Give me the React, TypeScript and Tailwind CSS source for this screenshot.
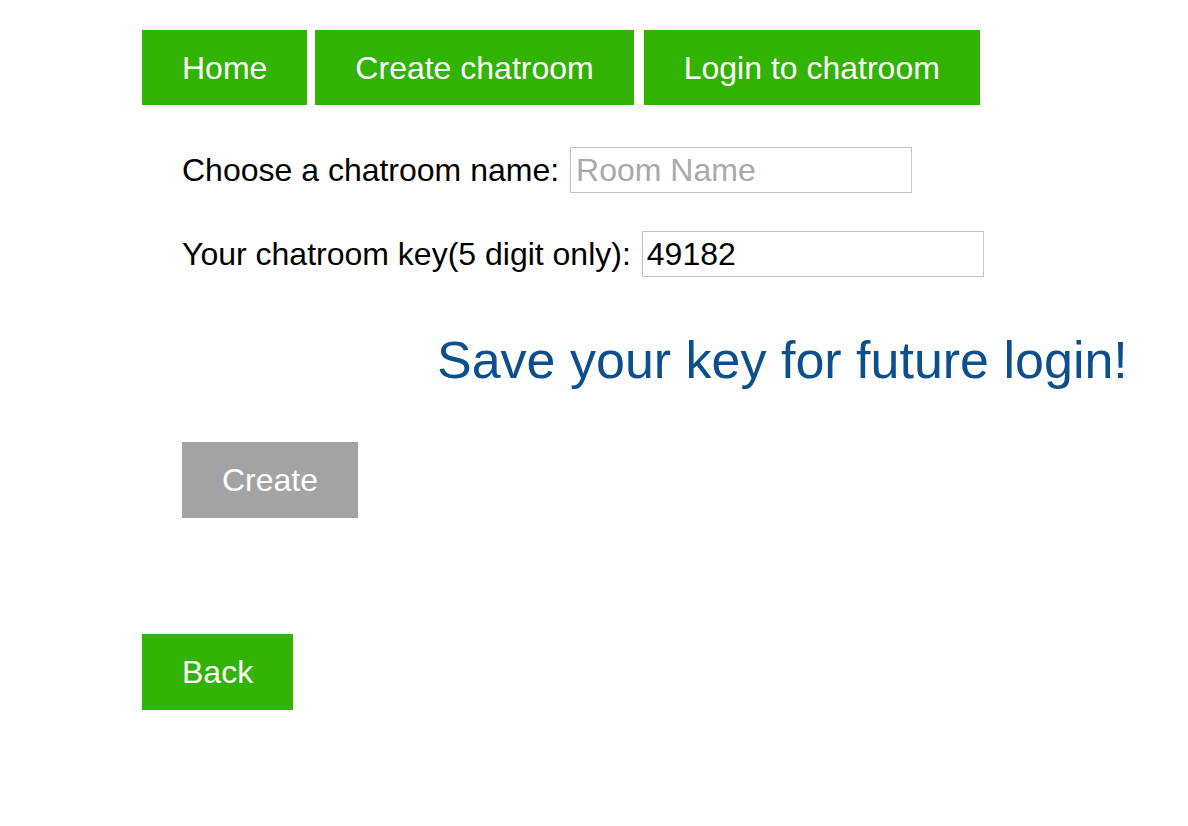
const navBtn =
  'h-[75px] px-10 bg-[#32b304] text-white text-[32px] flex items-center whitespace-nowrap';

export default function App() {
  return (
    <div
      className="min-h-screen bg-white pl-[142px] pt-[30px] text-black"
      style={{ fontFamily: '"Liberation Sans", Arial, Helvetica, sans-serif' }}
    >
      <nav className="flex">
        <button className={navBtn}>Home</button>
        <button className={navBtn + ' ml-2'}>Create chatroom</button>
        <button className={navBtn + ' ml-[10px]'}>Login to chatroom</button>
      </nav>

      <form className="pl-10 flex flex-col items-start" onSubmit={(e) => e.preventDefault()}>
        <div className="mt-[41px] flex items-center text-[32px]">
          <label htmlFor="room-name" className="whitespace-nowrap">Choose a chatroom name:</label>
          <input
            id="room-name"
            type="text"
            placeholder="Room Name"
            className="ml-[11px] h-[46px] w-[342px] border border-[#c2c2c2] px-[5px] text-[32px] outline-none placeholder:text-[#a9a9a9]"
          />
        </div>
        <div className="mt-[36px] flex items-center text-[32px]">
          <label htmlFor="room-key" className="whitespace-nowrap">Your chatroom key(5 digit only):</label>
          <input
            id="room-key"
            type="text"
            defaultValue="49182"
            className="ml-[11px] h-[46px] w-[342px] border border-[#c2c2c2] px-[4px] text-[32px] outline-none"
          />
        </div>
        <h2 className="mt-[52px] ml-[255px] text-[52px] leading-[60px] text-[#0b4f8c] whitespace-nowrap">
          Save your key for future login!
        </h2>
        <button
          type="submit"
          className="mt-[52px] h-[76px] px-10 bg-[#a3a3a3] text-white text-[32px]"
        >
          Create
        </button>
      </form>

      <button className="mt-[116px] h-[76px] px-10 bg-[#32b304] text-white text-[32px]">Back</button>
    </div>
  );
}
